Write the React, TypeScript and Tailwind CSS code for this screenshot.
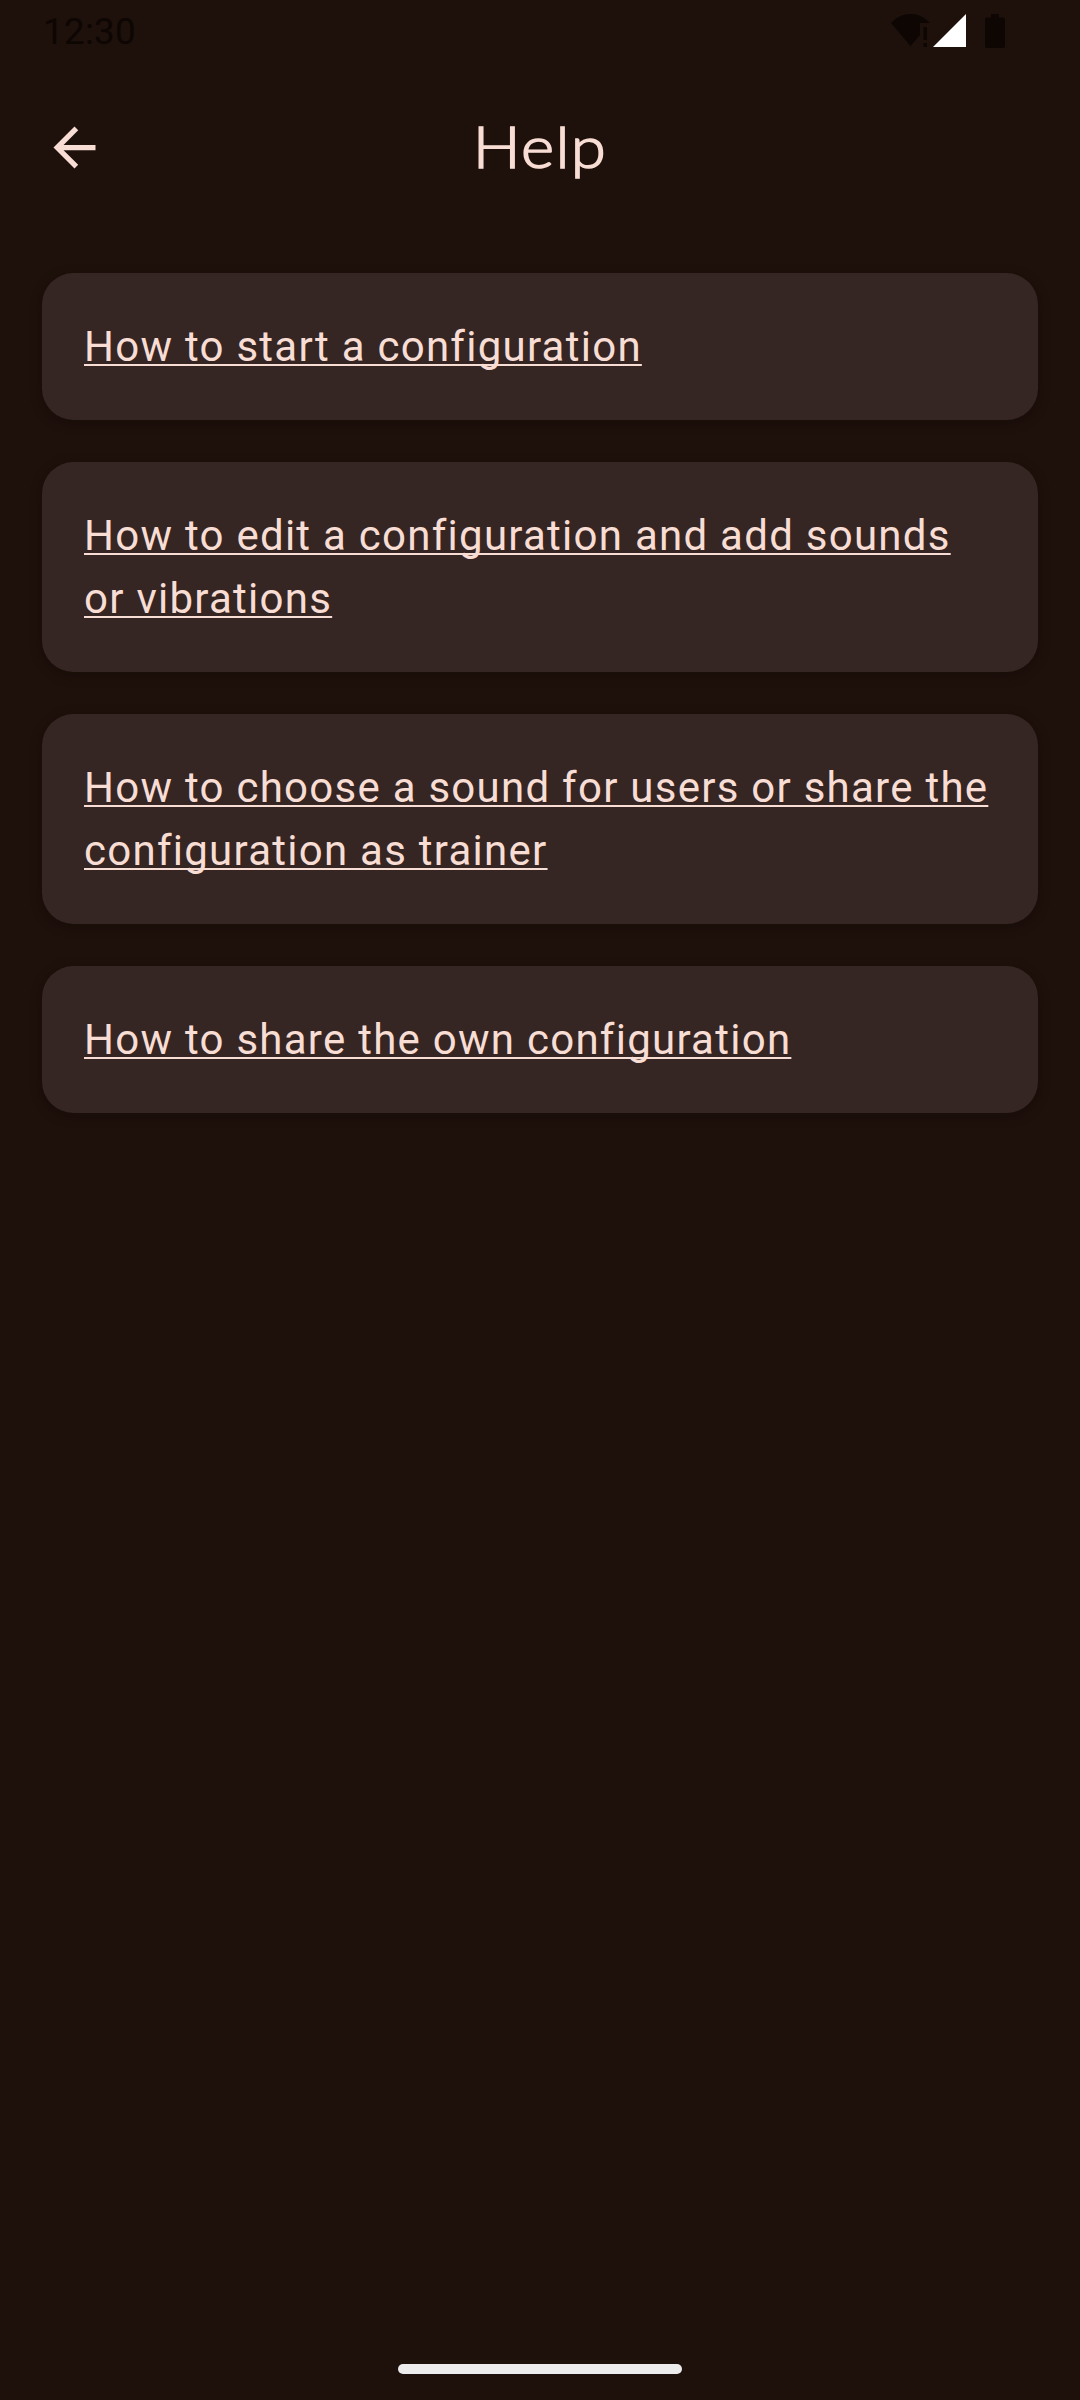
const topics = [
  'How to start a configuration',
  'How to edit a configuration and add sounds or vibrations',
  'How to choose a sound for users or share the configuration as trainer',
  'How to share the own configuration',
];

function StatusBar() {
  return (
    <div className="flex h-[63px] items-start justify-between pr-[75px] pl-[43px] text-[#0d0603]">
      <span className="mt-[10px] font-[Roboto,sans-serif] text-[36.75px] leading-[43px] tracking-[0.3px]">12:30</span>
      <div className="mt-[14px] flex">
        <svg width="42" height="34" viewBox="0 0 42 34" fill="currentColor">
          <path d="M0 9C11-3 28-3 39 9H29V21L19.500 32Z" />
          <path d="M32.500 13h3.500v13h-3.500zM32.500 29h3.500v4h-3.500z" />
        </svg>
        <svg width="33" height="34" viewBox="0 0 33 34" fill="#fff">
          <path d="M33 0V33H0Z" />
        </svg>
        <svg className="ml-[19px]" width="20" height="34" viewBox="0 0 20 34" fill="currentColor">
          <path d="M6 0h8v3.500h4a2 2 0 0 1 2 2V32a2 2 0 0 1-2 2H2a2 2 0 0 1-2-2V5.500a2 2 0 0 1 2-2h4z" />
        </svg>
      </div>
    </div>
  );
}

function Header() {
  return (
    <header className="grid h-[168px] grid-cols-[63px_1fr_63px] items-center px-[43px] text-[#f8ddd4]">
      <button aria-label="Back">
        <svg width="63" height="63" viewBox="0 0 24 24" fill="currentColor">
          <path d="M20 11H7.830l5.590-5.590L12 4l-8 8 8 8 1.410-1.410L7.830 13H20v-2z" />
        </svg>
      </button>
      <h1 className="mb-[3px] origin-center scale-x-[1.1] text-center font-[Lato,sans-serif] text-[57.75px] leading-[74px] font-light tracking-[1.2px] [-webkit-text-stroke:1.5px_#f8ddd4]">
        Help
      </h1>
    </header>
  );
}

export default function App() {
  return (
    <div className="flex h-[2400px] w-[1080px] flex-col bg-[#1e100b]">
      <StatusBar />
      <Header />
      <main className="mt-[42px] flex flex-1 flex-col gap-[42px] px-[42px]">
        {topics.map((topic) => (
          <section
            key={topic}
            className="rounded-[31.5px] bg-[#362623] p-[42px] shadow-[0_3px_14px_rgba(0,0,0,0.2)]"
          >
            <a className="block w-[912px] font-[Roboto,sans-serif] text-[42px] leading-[63px] tracking-[1.26px] text-[#f8ddd4] underline decoration-2 underline-offset-[3px] [text-decoration-skip-ink:none]">
              {topic}
            </a>
          </section>
        ))}
      </main>
      <div className="mx-auto mb-[26px] h-[10px] w-[284px] rounded-full bg-[#ececec]" />
    </div>
  );
}
